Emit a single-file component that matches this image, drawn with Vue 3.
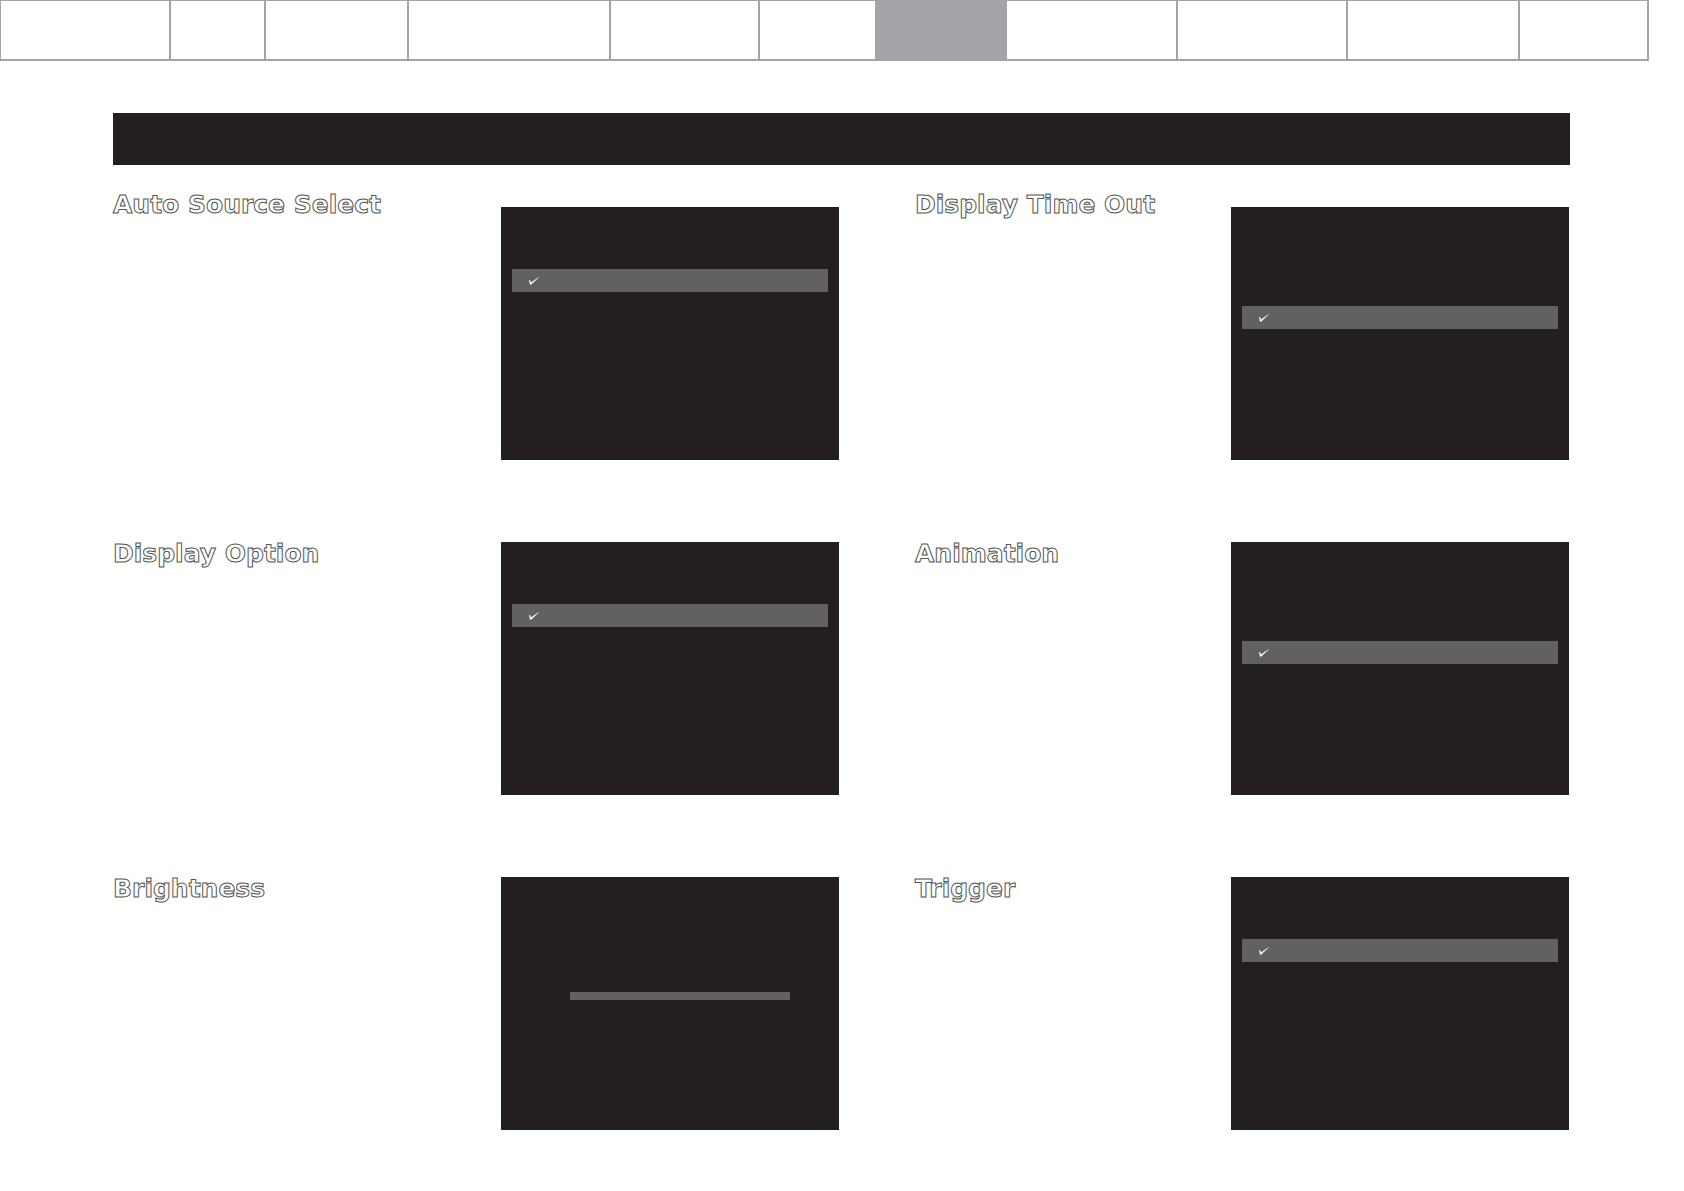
<script setup>
const tabs = [
  { id: 1 }, { id: 2 }, { id: 3 }, { id: 4 }, { id: 5 }, { id: 6 },
  { id: 7, active: true },
  { id: 8 }, { id: 9 }, { id: 10 }, { id: 11 },
]

const settings = [
  { id: 'source', title: 'Auto Source Select', rows: 1 },
  { id: 'timeout', title: 'Display Time Out', rows: 2 },
  { id: 'option', title: 'Display Option', rows: 1 },
  { id: 'animation', title: 'Animation', rows: 2 },
  { id: 'brightness', title: 'Brightness', slider: true },
  { id: 'trigger', title: 'Trigger', rows: 1 },
]
</script>

<template>
  <div class="page">
    <nav class="tabs">
      <span v-for="tab in tabs" :key="tab.id" class="tab" :class="{ active: tab.active }"></span>
    </nav>
    <header class="banner"></header>
    <main class="settings">
      <section v-for="item in settings" :key="item.id" class="setting">
        <h2 :id="item.id" class="title">{{ item.title }}</h2>
        <div class="screen">
          <input
            v-if="item.slider"
            class="slider"
            type="range"
            :aria-labelledby="item.id"
          />
          <ul v-else class="menu">
            <!-- the last row is the chosen one -->
            <li v-for="n in item.rows" :key="n" class="row" :class="{ chosen: n === item.rows }">
              <svg v-if="n === item.rows" class="check" viewBox="0 0 10 8" aria-hidden="true">
                <path d="M0 3.2 L1 2.9 L2 5.6 L9.8 0 L10 0.2 L2 7.8 L1 7.5 Z" />
              </svg>
            </li>
          </ul>
        </div>
      </section>
    </main>
  </div>
</template>

<style>
body {
  margin: 0;
  background: #fff;
}
</style>

<style scoped>
.page {
  font-family: "DejaVu Sans", Verdana, sans-serif;
  color: #231f20;
  padding-bottom: 60px;
}

.tabs {
  display: grid;
  grid-template-columns: 170fr 95fr 143fr 202fr 149fr 117fr 130fr 171fr 170fr 172fr 129fr;
  height: 58px;
  margin-right: 35px;
  border: solid #a3a4a7;
  border-width: 1px 0 2px 1px;
}

.tab {
  border-right: 2px solid #a3a4a7;
}

.tab.active {
  background: #a3a4a7;
  border-right: 0;
}

.banner {
  height: 52px;
  margin: 52px 114px 0 113px;
  background: #231f20;
}

.settings {
  display: grid;
  grid-template-columns: 726fr 654fr;
  gap: 80px 76px;
  margin: 26px 115px 0 113px;
}

.setting {
  display: flex;
  justify-content: space-between;
  align-items: flex-start;
}

.title {
  margin: 0;
  font-size: 25px;
  font-weight: 700;
  line-height: 28px;
  white-space: nowrap;
  color: #fff;
  -webkit-text-stroke: 1px #555;
}

.screen {
  box-sizing: border-box;
  flex: 0 0 338px;
  height: 253px;
  margin-top: 2px;
  padding: 62px 11px 0;
  background: #231f20;
}

.setting:nth-child(-n + 2) .screen {
  margin-top: 16px;
}

.menu {
  display: grid;
  gap: 14px;
  margin: 0;
  padding: 0;
  list-style: none;
}

.row {
  display: flex;
  align-items: center;
  height: 23px;
  padding-left: 17px;
}

.row.chosen {
  background: #636061;
}

.check {
  width: 10px;
  height: 8px;
  fill: #fff;
}

.slider {
  display: block;
  appearance: none;
  width: 220px;
  height: 8px;
  margin: 53px 0 0 58px;
  background: #636061;
}

.slider::-webkit-slider-thumb {
  appearance: none;
  width: 0;
  height: 0;
}
</style>
